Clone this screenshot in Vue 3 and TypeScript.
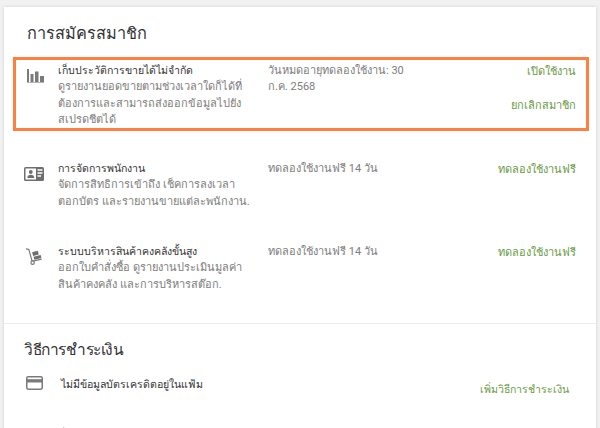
<script setup lang="ts">
interface Plan { icon: string; title: string; desc: string; status: string; actions: string[]; highlight?: boolean }
const plans: Plan[] = [
  { icon: 'chart', title: 'เก็บประวัติการขายได้ไม่จำกัด', desc: 'ดูรายงานยอดขายตามช่วงเวลาใดก็ได้ที่ต้องการและสามารถส่งออกข้อมูลไปยังสเปรดชีตได้', status: 'วันหมดอายุทดลองใช้งาน: 30 ก.ค. 2568', actions: ['เปิดใช้งาน', 'ยกเลิกสมาชิก'], highlight: true },
  { icon: 'badge', title: 'การจัดการพนักงาน', desc: 'จัดการสิทธิการเข้าถึง เช็คการลงเวลาตอกบัตร และรายงานขายแต่ละพนักงาน.', status: 'ทดลองใช้งานฟรี 14 วัน', actions: ['ทดลองใช้งานฟรี'] },
  { icon: 'cart', title: 'ระบบบริหารสินค้าคงคลังขั้นสูง', desc: 'ออกใบคำสั่งซื้อ ดูรายงานประเมินมูลค่าสินค้าคงคลัง และการบริหารสต๊อก.', status: 'ทดลองใช้งานฟรี 14 วัน', actions: ['ทดลองใช้งานฟรี'] },
]
</script>

<template>
  <div class="page">
    <main class="card">
      <section class="subs">
        <h2>การสมัครสมาชิก</h2>
        <div v-for="p in plans" :key="p.title" class="row" :class="{ hl: p.highlight }">
          <div class="ico" :class="p.icon">
            <svg v-if="p.icon === 'chart'" width="17" height="14" viewBox="0 0 17 14" fill="#7a7a7a">
              <rect x="0" y="0" width="2" height="13" /><rect x="3.5" y="5" width="3" height="8" /><rect x="8" y="2.5" width="3.5" height="10.5" /><rect x="13" y="7" width="4" height="6" /><rect x="0" y="13" width="17" height="1" fill="#b5b5b5" />
            </svg>
            <svg v-else-if="p.icon === 'badge'" width="20" height="14" viewBox="0 0 20 14">
              <rect width="20" height="14" rx="1.5" fill="#6f6f6f" />
              <rect x="1.5" y="1.5" width="10.5" height="11" fill="#fff" />
              <circle cx="6.8" cy="5" r="1.9" fill="#6f6f6f" /><path d="M3.3 11c0-2.4 1.6-3.3 3.5-3.3s3.5.9 3.5 3.3z" fill="#6f6f6f" />
              <path d="M13.5 3h5M13.5 6h5M13.5 9h3.5" stroke="#fff" stroke-width="1.3" />
            </svg>
            <svg v-else-if="p.icon === 'cart'" width="19" height="18" viewBox="0 0 20 19">
              <path d="M1 2l3 .6L7.5 15l10-2.2" fill="none" stroke="#777" stroke-width="1.2" />
              <circle cx="8" cy="16.5" r="1.8" fill="#fff" stroke="#777" stroke-width="1.2" />
              <path d="M7.5 5.5l6-1.5 1 4-6 1.5z M9 10.2l7.5-1.8.9 3.3-7.5 1.8z" fill="#6f6f6f" />
            </svg>
          </div>
          <div class="info">
            <div class="t">{{ p.title }}</div>
            <div class="d">{{ p.desc }}</div>
          </div>
          <div class="status">{{ p.status }}</div>
          <div class="actions">
            <a v-for="a in p.actions" :key="a">{{ a }}</a>
          </div>
        </div>
      </section>
      <section class="pay">
        <h2>วิธีการชำระเงิน</h2>
        <div class="pay-row">
          <svg class="cc" width="17" height="14" viewBox="0 0 17 14">
            <rect x=".75" y=".75" width="15.5" height="12.5" rx="1.4" fill="#fff" stroke="#7a7a7a" stroke-width="1.5" />
            <rect x="1" y="3.2" width="15" height="3.3" fill="#7a7a7a" />
          </svg>
          <span class="none">ไม่มีข้อมูลบัตรเครดิตอยู่ในแฟ้ม</span>
          <a class="add">เพิ่มวิธีการชำระเงิน</a>
        </div>
        <div class="next">ที่ออกรายงานภาษี</div>
      </section>
    </main>
  </div>
</template>

<style>
html, body { margin: 0; height: 428px; overflow: hidden; background: #f1f1f1; }
</style>

<style scoped>
.page { padding: 7px 4px 0; font-family: Roboto, "Noto Sans", "Liberation Sans", sans-serif; }
.card { background: #fff; box-shadow: 0 0 3px rgba(0,0,0,.14); height: 500px; }
h2 { margin: 0; font-size: 16.3px; font-weight: 400; line-height: 24px; color: #333; }
.subs { padding: 15px 7px 0 9px; height: 317px; box-sizing: border-box; border-bottom: 1px solid #ececec; }
.subs h2 { padding-left: 14px; margin-bottom: 11px; }
.row { display: grid; grid-template-columns: 31px 210px 1fr auto; padding: 0 13px 0 14px; height: 83px; font-size: 11px; line-height: 16.4px; color: #7d7d7d; }
.row.hl { height: 74px; border: 3px solid #ff7f41; padding: 0 10px 0 11px; box-sizing: border-box; margin-bottom: 30px; }
.ico.chart { padding-top: 9px; }
.ico.badge { padding-top: 6px; margin-left: -3px; }
.ico.cart { padding-top: 3px; margin-left: -2px; }
.hl .info, .hl .status { padding-top: 3px; }
.info { width: 196px; }
.t { color: #333; font-size: 10.55px; }
.status { width: 150px; }
.actions { display: flex; flex-direction: column; align-items: flex-end; gap: 14px; }
a { color: #6b9a45; padding-top: 1px; }
.hl .actions a { padding-top: 4px; }
.pay { padding: 14px 27px 0 20px; }
.pay h2 { font-size: 15.5px; letter-spacing: -0.4px; }
.pay-row { display: flex; align-items: flex-start; font-size: 10.6px; line-height: 16px; margin-top: 8px; color: #333; padding-left: 2px; height: 40px; }
.cc { margin: 6px 18px 0 0; }
.none { flex: 1; margin-top: 7px; }
.add { margin-top: 11px; }
.next { margin: 18px 0 0 34px; font-size: 11px; line-height: 16px; color: #333; }
</style>
